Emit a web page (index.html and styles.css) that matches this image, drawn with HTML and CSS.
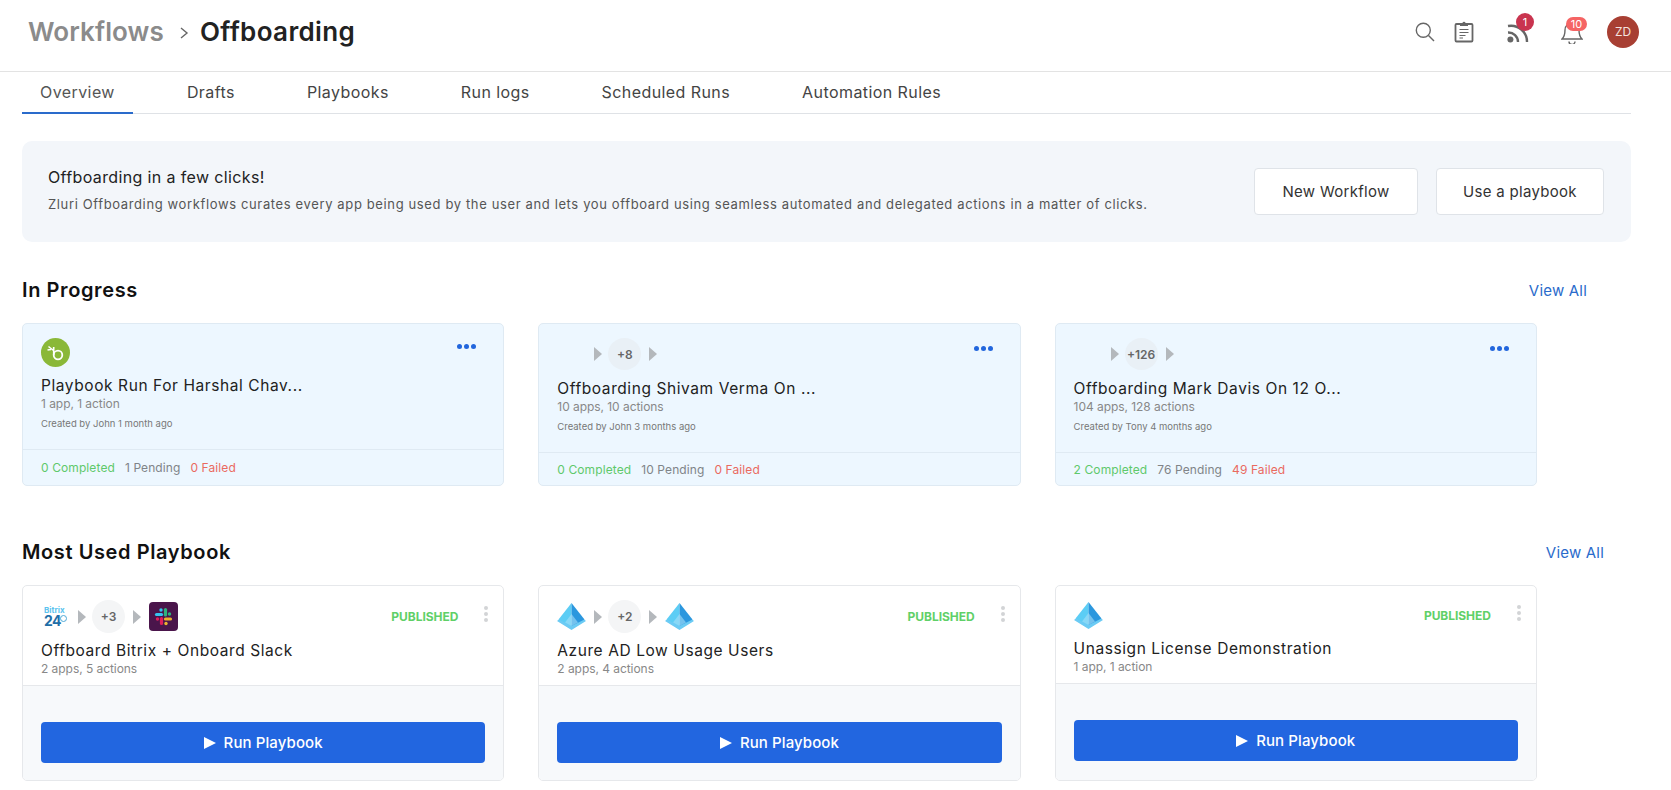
FILE: index.html
```html
<!DOCTYPE html>
<html lang="en">
<head>
    <meta charset="UTF-8">
    <meta name="viewport" content="width=device-width, initial-scale=1.0">
    <title>Offboarding</title>
    <link rel="stylesheet" href="styles.css">
</head>
<body>
    <!-- Top bar -->
    <header class="topbar">
        <div class="crumbs">
            <span class="crumb-parent">Workflows</span>
            <svg class="crumb-sep" width="10" height="14" viewBox="0 0 10 14"><path d="M2 2l6 5-6 5" fill="none" stroke="#666" stroke-width="1.4"/></svg>
            <span class="crumb-current">Offboarding</span>
        </div>
        <div class="top-icons">
            <svg class="ic-search" width="20" height="20" viewBox="0 0 20 20"><circle cx="8.3" cy="8.3" r="7" fill="none" stroke="#666" stroke-width="1.4"/><path d="M13.5 13.5l5.5 5.5" stroke="#666" stroke-width="1.4"/></svg>
            <svg class="ic-clip" width="20" height="23" viewBox="0 0 20 23"><path d="M6 4H2.500a1 1 0 0 0-1 1v15.500a1 1 0 0 0 1 1h15a1 1 0 0 0 1-1V5a1 1 0 0 0-1-1H14" fill="none" stroke="#666" stroke-width="1.8"/><path d="M6 6V3h2.400a1.700 1.700 0 0 1 3.200 0H14v3z" fill="#666"/><path d="M5.500 9.500h9M5.500 12.500h9M5.500 15.500h6M5.500 18h3.500" stroke="#666" stroke-width="1.200"/></svg>
            <div class="ic-wrap ic-rss">
                <svg width="22" height="19" viewBox="0 0 22 19"><circle cx="3.4" cy="15.4" r="3" fill="#666"/><path d="M1 8.500a9.500 9.500 0 0 1 10 9.500M1 2a16 16 0 0 1 19 16" fill="none" stroke="#666" stroke-width="2.400"/></svg>
                <span class="badge badge-round">1</span>
            </div>
            <div class="ic-wrap ic-bell">
                <svg width="22" height="25" viewBox="0 0 22 25"><path d="M1 20c2-2 3-4 3-9a7 7 0 0 1 14 0c0 5 1 7 3 9z" fill="none" stroke="#666" stroke-width="1.400"/><path d="M8 22.500a3 3 0 0 0 6 0" fill="none" stroke="#666" stroke-width="1.400"/></svg>
                <span class="badge badge-pill">10</span>
            </div>
            <div class="avatar">ZD</div>
        </div>
    </header>

    <!-- Tabs -->
    <nav class="tabs">
        <a class="tab active">Overview</a>
        <a class="tab">Drafts</a>
        <a class="tab">Playbooks</a>
        <a class="tab">Run logs</a>
        <a class="tab">Scheduled Runs</a>
        <a class="tab">Automation Rules</a>
    </nav>

    <!-- Banner -->
    <section class="banner">
        <div class="banner-copy">
            <div class="banner-title">Offboarding in a few clicks!</div>
            <div class="banner-text">Zluri Offboarding workflows curates every app being used by the user and lets you offboard using seamless automated and delegated actions in a matter of clicks.</div>
        </div>
        <div class="banner-actions">
            <button class="btn-outline btn-new">New Workflow</button>
            <button class="btn-outline btn-use">Use a playbook</button>
        </div>
    </section>

    <!-- In progress -->
    <div class="section-head head-progress">
        <h2>In Progress</h2>
        <a class="view-all">View All</a>
    </div>
    <div class="card-grid">
        <div class="card run-card">
            <div class="card-body">
                <div class="apps-row">
                    <svg class="logo" width="29" height="29" viewBox="0 0 29 29"><circle cx="14.500" cy="14.500" r="14.500" fill="#8ab838"/><circle cx="17" cy="17" r="4.300" fill="none" stroke="#fff" stroke-width="1.800"/><path d="M12.700 17V9M12.500 12.500L7.500 8.500M10 11.500L6.500 12" fill="none" stroke="#fff" stroke-width="1.600"/></svg>
                    <span class="dots"><i></i><i></i><i></i></span>
                </div>
                <div class="card-title">Playbook Run For Harshal Chav...</div>
                <div class="card-sub">1 app, 1 action</div>
                <div class="card-meta">Created by John 1 month ago</div>
            </div>
            <div class="run-stats">
                <span class="stat-ok">0 Completed</span>
                <span class="stat-wait">1 Pending</span>
                <span class="stat-fail">0 Failed</span>
            </div>
        </div>

        <div class="card run-card">
            <div class="card-body">
                <div class="apps-row">
                    <span class="logo logo-blank"></span>
                    <span class="arrow"></span>
                    <span class="more">+8</span>
                    <span class="arrow"></span>
                    <span class="dots"><i></i><i></i><i></i></span>
                </div>
                <div class="card-title">Offboarding Shivam Verma On ...</div>
                <div class="card-sub">10 apps, 10 actions</div>
                <div class="card-meta">Created by John 3 months ago</div>
            </div>
            <div class="run-stats">
                <span class="stat-ok">0 Completed</span>
                <span class="stat-wait">10 Pending</span>
                <span class="stat-fail">0 Failed</span>
            </div>
        </div>

        <div class="card run-card">
            <div class="card-body">
                <div class="apps-row">
                    <span class="logo logo-blank"></span>
                    <span class="arrow"></span>
                    <span class="more">+126</span>
                    <span class="arrow"></span>
                    <span class="dots"><i></i><i></i><i></i></span>
                </div>
                <div class="card-title">Offboarding Mark Davis On 12 O...</div>
                <div class="card-sub">104 apps, 128 actions</div>
                <div class="card-meta">Created by Tony 4 months ago</div>
            </div>
            <div class="run-stats">
                <span class="stat-ok">2 Completed</span>
                <span class="stat-wait">76 Pending</span>
                <span class="stat-fail">49 Failed</span>
            </div>
        </div>
    </div>

    <!-- Most used -->
    <div class="section-head head-used">
        <h2>Most Used Playbook</h2>
        <a class="view-all">View All</a>
    </div>
    <div class="card-grid">
        <div class="card play-card">
            <div class="card-body">
                <div class="apps-row">
                    <span class="logo logo-bitrix"><span class="bitrix-top">Bitrix</span><span class="bitrix-num">24<i class="bitrix-clock"></i></span></span>
                    <span class="arrow"></span>
                    <span class="more">+3</span>
                    <span class="arrow"></span>
                    <svg class="logo" width="29" height="29" viewBox="0 0 29 29">
                        <rect width="29" height="29" rx="4" fill="#4a154b"/>
                        <path d="M16.500 7.500v5.500" stroke="#2eb67d" stroke-width="3.200" stroke-linecap="round"/><circle cx="20.500" cy="12" r="1.700" fill="#2eb67d"/>
                        <path d="M16.500 17h5" stroke="#ecb22e" stroke-width="3.200" stroke-linecap="round"/><circle cx="17" cy="21.500" r="1.700" fill="#ecb22e"/>
                        <path d="M12.500 16.500v5" stroke="#e01e5a" stroke-width="3.200" stroke-linecap="round"/><circle cx="8.500" cy="17" r="1.700" fill="#e01e5a"/>
                        <path d="M7.500 12.500h5" stroke="#36c5f0" stroke-width="3.200" stroke-linecap="round"/><circle cx="12" cy="8" r="1.700" fill="#36c5f0"/>
                    </svg>
                    <span class="published">PUBLISHED</span>
                    <span class="kebab"><i></i><i></i><i></i></span>
                </div>
                <div class="card-title">Offboard Bitrix + Onboard Slack</div>
                <div class="card-sub">2 apps, 5 actions</div>
            </div>
            <div class="play-foot">
                <button class="btn-run"><span class="play"></span>Run Playbook</button>
            </div>
        </div>

        <div class="card play-card">
            <div class="card-body">
                <div class="apps-row">
                    <svg class="logo" width="29" height="29" viewBox="0 0 29 29"><use href="#azure"/></svg>
                    <span class="arrow"></span>
                    <span class="more">+2</span>
                    <span class="arrow"></span>
                    <svg class="logo" width="29" height="29" viewBox="0 0 29 29"><use href="#azure"/></svg>
                    <span class="published">PUBLISHED</span>
                    <span class="kebab"><i></i><i></i><i></i></span>
                </div>
                <div class="card-title">Azure AD Low Usage Users</div>
                <div class="card-sub">2 apps, 4 actions</div>
            </div>
            <div class="play-foot">
                <button class="btn-run"><span class="play"></span>Run Playbook</button>
            </div>
        </div>

        <div class="card play-card">
            <div class="card-body">
                <div class="apps-row">
                    <svg class="logo" width="29" height="29" viewBox="0 0 29 29"><use href="#azure"/></svg>
                    <span class="published">PUBLISHED</span>
                    <span class="kebab"><i></i><i></i><i></i></span>
                </div>
                <div class="card-title">Unassign License Demonstration</div>
                <div class="card-sub">1 app, 1 action</div>
            </div>
            <div class="play-foot">
                <button class="btn-run"><span class="play"></span>Run Playbook</button>
            </div>
        </div>
    </div>

    <!-- Azure AD logo, used three times above -->
    <svg class="svg-defs" width="0" height="0">
        <symbol id="azure" viewBox="0 0 29 29">
            <polygon points="0,19 5,15 14.500,23 24,15 29,19 14.500,28" fill="#6ccbf4"/>
            <polygon points="14.500,1 1.500,17.500 14.500,24" fill="#5ccdf5"/>
            <polygon points="14.500,1 27.500,17.500 14.500,24" fill="#2b97de"/>
            <polygon points="14.500,12 8,20.500 14.500,24 21,20.500" fill="#a5e0f8" opacity="0.6"/>
        </symbol>
    </svg>
</body>
</html>
```

FILE: styles.css
```css
/* Base */
body {
    margin: 0;
    font-family: Inter, "Noto Sans", sans-serif;
    color: #222;
    background: #fff;
}
h2 {
    margin: 0;
    font-size: 20px;
    line-height: 28px;
    font-weight: 600;
    color: #111;
    letter-spacing: 0.6px;
}
button {
    font-family: inherit;
    cursor: pointer;
}

/* Top bar */
.topbar {
    height: 71px;
    box-sizing: content-box;
    border-bottom: 1px solid #e3e3e3;
    display: flex;
    align-items: center;
    justify-content: space-between;
    padding: 0 32px 0 28px;
}
.crumbs {
    display: flex;
    align-items: center;
    margin-bottom: 8px;
}
.crumb-parent,
.crumb-current {
    font-size: 26px;
    font-weight: 600;
    letter-spacing: 0.1px;
}
.crumb-parent {
    color: #8b8b8b;
}
.crumb-current {
    letter-spacing: 0.35px;
}
.crumb-sep {
    margin: 3px 11px 0 15px;
}
.top-icons {
    display: flex;
    align-items: center;
    margin-bottom: 8px;
}
.ic-search {
    margin-right: 19px;
}
.ic-clip {
    margin-right: 33px;
}
.ic-wrap {
    position: relative;
    display: flex;
}
.ic-rss {
    margin-top: 3px;
    margin-right: 32px;
}
.ic-bell {
    margin-right: 24px;
}
.badge {
    position: absolute;
    display: flex;
    align-items: center;
    justify-content: center;
    color: #fff;
    font-size: 11px;
}
.badge-round {
    top: -11px;
    left: 9px;
    width: 18px;
    height: 18px;
    border-radius: 50%;
    background: #c9344f;
}
.badge-pill {
    top: -2px;
    left: 5px;
    width: 21px;
    height: 14px;
    border-radius: 7px;
    background: #f56464;
}
.avatar {
    width: 32px;
    height: 32px;
    border-radius: 50%;
    background: #a83f33;
    color: #f3e2df;
    font-size: 12px;
    display: flex;
    align-items: center;
    justify-content: center;
}

/* Tabs */
.tabs {
    display: flex;
    gap: 36px;
    margin: 0 40px 0 22px;
    height: 41px;
    border-bottom: 1px solid #dfe2e6;
}
.tab {
    padding: 0 18px;
    font-size: 16px;
    line-height: 41px;
    height: 40px;
    color: #444;
    letter-spacing: 0.42px;
}
.tab.active {
    color: #555;
    border-bottom: 2px solid #2a6bcb;
}

/* Banner */
.banner {
    margin: 27px 40px 0 22px;
    height: 101px;
    border-radius: 10px;
    background: #f3f6fa;
    display: flex;
    align-items: center;
    justify-content: space-between;
    padding: 0 27px 0 26px;
}
.banner-copy {
    margin-bottom: 3px;
}
.banner-title {
    font-size: 16px;
    line-height: 20px;
    color: #222;
    margin-bottom: 8px;
    letter-spacing: 0.37px;
}
.banner-text {
    font-size: 13px;
    line-height: 18px;
    color: #555;
    letter-spacing: 0.63px;
}
.banner-actions {
    display: flex;
    gap: 18px;
}
.btn-outline {
    height: 47px;
    background: #fff;
    border: 1px solid #dfe3e8;
    border-radius: 4px;
    font-size: 15px;
    color: #333;
    letter-spacing: 0.3px;
}
.btn-new {
    width: 164px;
}
.btn-use {
    width: 168px;
}

/* Section headings */
.section-head {
    display: flex;
    justify-content: space-between;
    align-items: center;
    margin: 0 40px 19px 22px;
}
.head-progress {
    margin-top: 34px;
    padding-right: 44px;
}
.head-used {
    margin-top: 52px;
    padding-right: 27px;
}
.view-all {
    font-size: 15px;
    color: #2a6bcb;
    letter-spacing: 0.2px;
}

/* Cards */
.card-grid {
    display: grid;
    grid-template-columns: repeat(3, 482.3px);
    gap: 34px;
    margin-left: 22px;
}
.card {
    display: flex;
    flex-direction: column;
    border-radius: 5px;
    box-sizing: border-box;
}
.run-card {
    height: 163px;
    background: #edf7ff;
    border: 1px solid #dfeaf3;
}
.play-card {
    height: 196px;
    border: 1px solid #e6e8eb;
    overflow: hidden;
}
.card-body {
    padding: 14px 27px 18px 18px;
}
.play-card .card-body {
    padding: 15px 15px 9px 18px;
}
.apps-row {
    display: flex;
    align-items: center;
    gap: 8px;
}
.logo {
    flex: none;
    display: block;
}
.logo-blank {
    width: 29px;
    height: 29px;
}
.arrow {
    width: 0;
    height: 0;
    border-left: 8px solid #b4b8bc;
    border-top: 7px solid transparent;
    border-bottom: 7px solid transparent;
}
.more {
    flex: none;
    margin: -1px 0 -1px -2px;
    min-width: 33px;
    height: 33px;
    border-radius: 50%;
    background: #f4f5f6;
    display: flex;
    align-items: center;
    justify-content: center;
    font-size: 12px;
    font-weight: 600;
    color: #666;
}
.run-card .more {
    height: 32px;
    margin: 0 0 0 -2px;
    background: #e9f0f6;
}
.dots {
    display: flex;
    gap: 2px;
    margin: -12px 0 0 auto;
}
.dots i {
    width: 5px;
    height: 5px;
    border-radius: 50%;
    background: #2266dd;
}
.kebab {
    display: flex;
    flex-direction: column;
    gap: 2px;
    margin: -6px 0 0 18px;
}
.kebab i {
    width: 4px;
    height: 4px;
    border-radius: 50%;
    background: #d2d4d6;
}
.published {
    margin-left: auto;
    font-size: 12px;
    font-weight: 700;
    color: #5fd068;
    letter-spacing: -0.05px;
}
.card-title {
    margin-top: 9px;
    font-size: 15.5px;
    line-height: 20px;
    color: #222;
    letter-spacing: 0.58px;
}
.card-sub {
    font-size: 12px;
    line-height: 15px;
    color: #888;
    letter-spacing: -0.05px;
}
.card-meta {
    margin-top: 6px;
    font-size: 9.5px;
    line-height: 14px;
    color: #777;
}
.run-stats {
    flex: 1;
    display: flex;
    align-items: center;
    gap: 10px;
    padding: 0 18px;
    border-top: 1px solid #dfeaf3;
    font-size: 12px;
    letter-spacing: 0.1px;
}
.stat-ok {
    color: #5fc96b;
}
.stat-wait {
    color: #808488;
}
.stat-fail {
    color: #ea6a5f;
}

/* Playbook footer */
.play-foot {
    flex: 1;
    background: #f7f9fb;
    border-top: 1px solid #e6e8eb;
    padding: 36px 18px 0;
}
.btn-run {
    width: 100%;
    height: 41px;
    border: 0;
    border-radius: 4px;
    background: #2266e0;
    color: #fff;
    font-size: 15px;
    font-weight: 500;
    letter-spacing: 0.1px;
    display: flex;
    align-items: center;
    justify-content: center;
}
.play {
    width: 0;
    height: 0;
    margin-right: 8px;
    border-left: 12px solid #fff;
    border-top: 6px solid transparent;
    border-bottom: 6px solid transparent;
}

/* Bitrix24 logo */
.logo-bitrix {
    width: 26px;
    height: 29px;
    padding-left: 3px;
    display: flex;
    flex-direction: column;
    justify-content: center;
    font-weight: 700;
}
.bitrix-top {
    font-size: 8px;
    line-height: 8px;
    color: #5cc3ee;
}
.bitrix-num {
    position: relative;
    font-size: 14px;
    line-height: 13px;
    color: #1f6fa8;
    letter-spacing: -0.5px;
}
.bitrix-clock {
    position: absolute;
    left: 16px;
    top: 1px;
    width: 5px;
    height: 5px;
    border: 1px solid #4fa9d8;
    border-radius: 50%;
}
.svg-defs {
    position: absolute;
}
```
